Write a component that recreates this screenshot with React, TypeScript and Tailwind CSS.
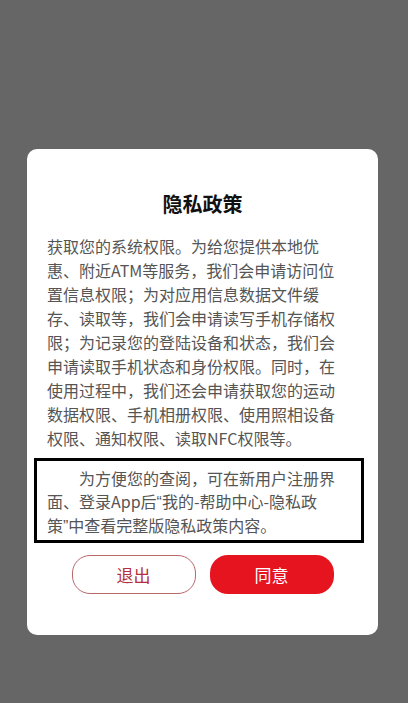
const PrivacyDialog = () => {
  return (
    <div className="w-[351px] rounded-[10px] bg-white pt-[41px] pb-[41px]">
      <h2 className="text-center text-[20px] leading-[28px] font-bold text-[#111]">隐私政策</h2>

      <p className="ml-[20px] mt-[16px] w-[292px] text-[16px] leading-[24px] text-[#555]">
        获取您的系统权限。为给您提供本地优惠、附近ATM等服务，我们会申请访问位置信息权限；为对应用信息数据文件缓存、读取等，我们会申请读写手机存储权限；为记录您的登陆设备和状态，我们会申请读取手机状态和身份权限。同时，在使用过程中，我们还会申请获取您的运动数据权限、手机相册权限、使用照相设备权限、通知权限、读取NFC权限等。
      </p>

      <div className="ml-[7px] mt-[8px] w-[330px] border-[3px] border-black pl-[10px] pt-[6px] pb-[2px]">
        <p className="w-[291px] indent-[2em] text-[16px] leading-[23px] text-[#555]">
          为方便您的查阅，可在新用户注册界面、登录App后
          <span style={{ fontFamily: '"Liberation Sans", sans-serif' }}>“</span>
          我的-帮助中心-隐私政策
          <span style={{ fontFamily: '"Liberation Sans", sans-serif' }}>”</span>
          中查看完整版隐私政策内容。
        </p>
      </div>

      <div className="mt-[12px] flex justify-center gap-[14px]">
        <button className="h-[39px] w-[124px] rounded-[18px] border border-[#b86868] bg-white text-[17px] text-[#b3303c]">
          退出
        </button>
        <button className="h-[39px] w-[124px] rounded-[18px] bg-[#e6141f] text-[17px] text-white">
          同意
        </button>
      </div>
    </div>
  );
};

export default function App() {
  return (
    <div
      className="flex h-[703px] w-[408px] items-start bg-[#666666] pl-[27px] pt-[149px]"
      style={{ fontFamily: '"Noto Sans CJK SC", "Noto Sans", sans-serif' }}
    >
      <PrivacyDialog />
    </div>
  );
}
